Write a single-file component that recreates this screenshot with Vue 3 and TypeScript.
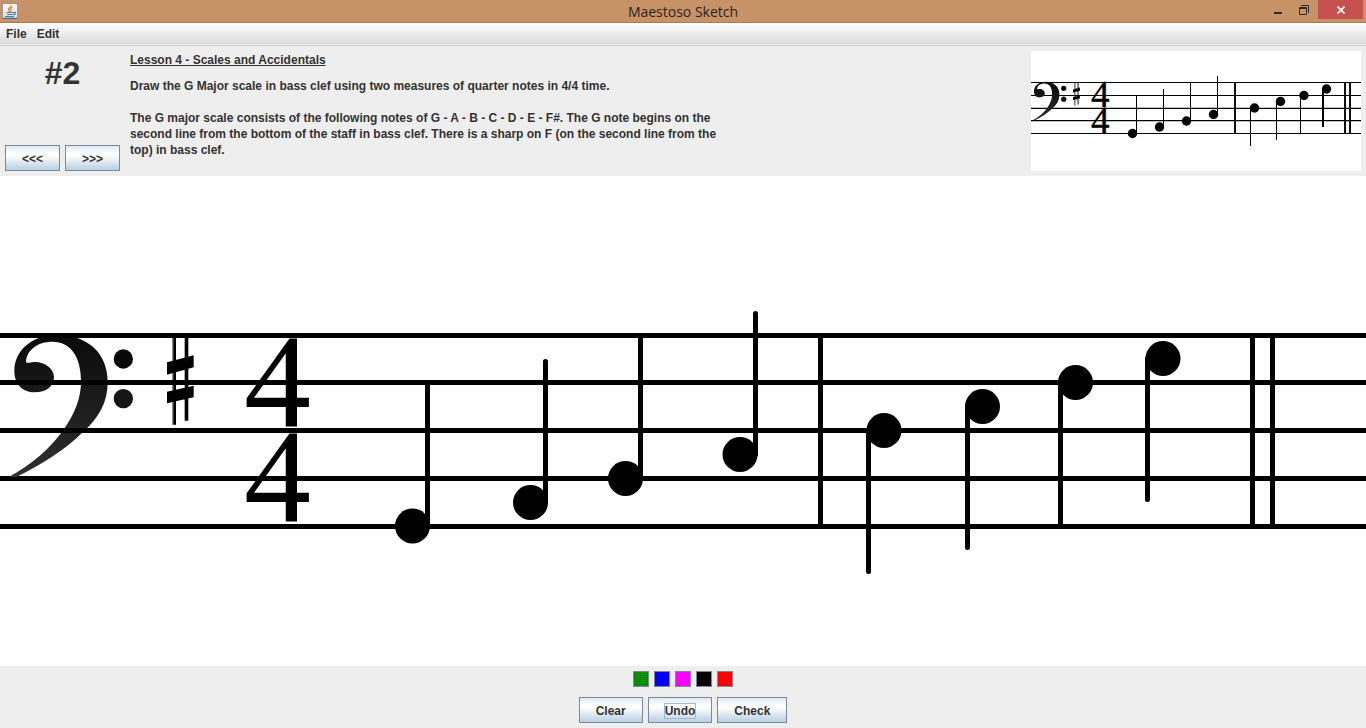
<script setup lang="ts">
import { ref } from 'vue'

interface Note {
  x: number
  y: number
  stem: number
  end: number
  width?: number
}

interface Swatch {
  name: string
  className: string
}

const staffLines: number[] = [159.5, 206.5, 254.5, 302.5, 350.5]
const barLines: number[] = [820.5, 1252.5, 1272.5]
const notes: Note[] = [
  { x: 412.5, y: 350, stem: 427.5, end: 209 },
  { x: 530.5, y: 326.5, stem: 545.5, end: 185.5 },
  { x: 625.5, y: 302.5, stem: 640.5, end: 161 },
  { x: 740, y: 278.5, stem: 755.5, end: 137.5 },
  { x: 884, y: 254.5, stem: 868.5, end: 395.5 },
  { x: 982.5, y: 230.5, stem: 967.5, end: 371.5 },
  { x: 1075.5, y: 206.5, stem: 1060.5, end: 348 },
  { x: 1163, y: 182.5, stem: 1147.5, end: 323.5 },
]

const previewLines: number[] = [31.5, 44.5, 57.5, 69.5, 82.5]
const previewBars: number[] = [204, 314, 319]
const previewNotes: Note[] = [
  { x: 101.5, y: 82.5, stem: 105.5, end: 45 },
  { x: 128.5, y: 76, stem: 132.5, end: 38 },
  { x: 155.5, y: 70, stem: 159.5, end: 32 },
  { x: 182.5, y: 63.5, stem: 186.5, end: 25 },
  { x: 223.5, y: 57, stem: 219.5, end: 95 },
  { x: 249.5, y: 50.5, stem: 245.5, end: 89 },
  { x: 273, y: 44.5, stem: 269.5, end: 82 },
  { x: 295.5, y: 38, stem: 292, end: 76, width: 2 },
]

const swatches: Swatch[] = [
  { name: 'Green', className: 'green' },
  { name: 'Blue', className: 'blue' },
  { name: 'Magenta', className: 'magenta' },
  { name: 'Black', className: 'black' },
  { name: 'Red', className: 'red' },
]
const ink = ref<string>('Black')
</script>

<template>
  <div class="window">
    <header class="titlebar">
      <svg class="app-icon" viewBox="0 0 16 16" aria-hidden="true">
        <defs>
          <linearGradient id="tile" x1="0" y1="0" x2="0" y2="1">
            <stop offset="0" stop-color="#fdfdfd" />
            <stop offset="1" stop-color="#d3dde3" />
          </linearGradient>
        </defs>
        <rect x="0.5" y="0.5" width="15" height="15" rx="1.5" fill="url(#tile)" stroke="#8a9aa5" />
        <path d="M0.8 15.4h14.4" stroke="#3f6680" />
        <path d="M9.4 1.8C10 4 6 4.8 6.4 6.6C6.6 7.5 7.4 8 7.6 8.8M10.6 4.2C8.4 5 8.2 5.8 8.9 6.8C9.3 7.5 8.9 8.2 8.4 8.8" fill="none" stroke="#e9801c" stroke-width="1.1" />
        <path d="M4.5 9.5h7M5 11.5h5.6M3 13.6h9M11.6 9.4c2.6-.8 2.6 1.9-.4 2.5" fill="none" stroke="#4d7fa3" stroke-width="1.1" />
      </svg>
      <h1 class="title">Maestoso Sketch</h1>
      <div class="controls">
        <button type="button" class="control" aria-label="Minimize">
          <svg width="10" height="12" viewBox="0 0 10 12"><path d="M1 9h8" stroke="#2a2a2a" stroke-width="2" /></svg>
        </button>
        <button type="button" class="control" aria-label="Restore">
          <svg width="10" height="12" viewBox="0 0 10 12"><path d="M2 1.5h7.5V9M.5 3.5h7v7h-7zM0 4.5h8" fill="none" stroke="#2a2a2a" /></svg>
        </button>
        <button type="button" class="control close" aria-label="Close">
          <svg width="8" height="8" viewBox="0 0 8 8"><path d="M.5.5l7 7M7.5.5l-7 7" stroke="#fff" stroke-width="1.7" /></svg>
        </button>
      </div>
    </header>

    <nav class="menubar">
      <button type="button" class="menu">File</button>
      <button type="button" class="menu">Edit</button>
    </nav>

    <section class="lesson">
      <div class="question">
        <h2 class="number">#2</h2>
        <div class="pager">
          <button type="button" class="button">&lt;&lt;&lt;</button>
          <button type="button" class="button">&gt;&gt;&gt;</button>
        </div>
      </div>
      <div class="text">
        <h3 class="lesson-title">Lesson 4 - Scales and Accidentals</h3>
        <p>Draw the G Major scale in bass clef using two measures of quarter notes in 4/4 time.</p>
        <p>The G major scale consists of the following notes of G - A - B - C - D - E - F#. The G note begins on the second line from the bottom of the staff in bass clef. There is a sharp on F (on the second line from the top) in bass clef.</p>
      </div>
      <svg class="preview" viewBox="0 0 330 120" role="img" aria-label="Example scale">
        <path d="M0 56.5h330M0 70.5h330" stroke="#000" stroke-opacity="0.25" />
        <line v-for="y in previewLines" :key="y" x1="0" x2="330" :y1="y" :y2="y" stroke="#000" />
        <use href="#bass-clef" x="-1" y="28" width="41" height="41" />
        <use href="#sharp" x="42" y="31" width="7" height="25" />
        <text class="meter preview-meter" x="60" y="56" font-size="37">4</text>
        <text class="meter preview-meter" x="60" y="82" font-size="37">4</text>
        <line v-for="x in previewBars" :key="x" :x1="x" :x2="x" y1="31" y2="83" stroke="#111" stroke-width="2" />
        <g v-for="note in previewNotes" :key="note.x">
          <circle :cx="note.x" :cy="note.y" r="4.7" />
          <line :x1="note.stem" :x2="note.stem" :y1="note.y" :y2="note.end" stroke="#000" :stroke-width="note.width ?? 1" />
        </g>
      </svg>
    </section>

    <main class="stage">
      <svg class="score" viewBox="0 0 1366 490" role="img" aria-label="Staff">
        <defs>
          <linearGradient id="clef-ink" x1="0" y1="0" x2="0" y2="1">
            <stop offset="0" stop-color="#0a0a0a" />
            <stop offset="1" stop-color="#303030" />
          </linearGradient>
          <symbol id="bass-clef" viewBox="0 0 450 450" overflow="visible">
            <path d="M26 456C95 419 152 369 188 318C224 267 244 220 243 165C242 95 212 50 157 50C112 50 80 76 78 110Q80 115 88 113C125 104 162 127 162 157C162 184 138 202 105 202C66 202 43 176 43 138C43 78 94 30 172 30C264 30 323 86 323 170C323 232 298 276 248 322C196 374 122 422 48 456z" fill="url(#clef-ink)" />
            <circle cx="370" cy="102" r="29" fill="#080808" />
            <circle cx="370" cy="221" r="29" fill="#161616" />
          </symbol>
          <symbol id="sharp" viewBox="501 51 81 270">
            <path d="M516 53h5v261h-5z" fill="#888" />
            <path d="M520 53h8v261h-8zM554 53h11v249h-11zM501 127l80-21v36l-80 22zM501 215l80-18v35l-80 18z" />
          </symbol>
        </defs>
        <line v-for="y in staffLines" :key="y" x1="0" x2="1366" :y1="y" :y2="y" stroke="#000" stroke-width="5" />
        <use href="#bass-clef" x="0" y="149" width="150" height="150" />
        <use href="#sharp" x="167" y="161" width="27" height="90" />
        <text class="meter" x="244" y="250" font-size="134">4</text>
        <text class="meter" x="244" y="345" font-size="134">4</text>
        <path class="stroke" d="M0 159.5h1366M0 206.5h1366M0 254.5h1366" />
        <line v-for="x in barLines" :key="x" class="stroke" :x1="x" :x2="x" y1="160" y2="350" />
        <g v-for="note in notes" :key="note.x">
          <circle :cx="note.x" :cy="note.y" r="17.5" />
          <line class="stroke" :x1="note.stem" :x2="note.stem" :y1="note.y" :y2="note.end" />
        </g>
      </svg>
    </main>

    <footer class="tools">
      <div class="swatches">
        <button
          v-for="swatch in swatches"
          :key="swatch.name"
          type="button"
          class="swatch"
          :class="swatch.className"
          :aria-label="swatch.name"
          :aria-pressed="ink === swatch.name"
          @click="ink = swatch.name"
        ></button>
      </div>
      <div class="actions">
        <button type="button" class="button">Clear</button>
        <button type="button" class="button"><span class="focused">Undo</span></button>
        <button type="button" class="button">Check</button>
      </div>
    </footer>
  </div>
</template>

<style>
body {
  margin: 0;
  background: #eee;
}
</style>

<style scoped>
.window {
  display: flex;
  flex-direction: column;
  min-height: 100vh;
  background: #eee;
  color: #333;
  font: bold 12px/16px "Liberation Sans", Arial, sans-serif;
}
h1,
h2,
h3,
p {
  margin: 0;
}
button {
  box-sizing: border-box;
  margin: 0;
  padding: 0;
  border: 0;
  background: none;
  color: inherit;
  font: inherit;
}
.titlebar {
  display: grid;
  grid-template-columns: 1fr auto 1fr;
  box-sizing: border-box;
  height: 23px;
  background: #c79265;
  border-bottom: 1px solid #aa7a50;
}
.app-icon {
  width: 16px;
  height: 16px;
  margin: 3px 2px;
}
.title {
  color: #2a2522;
  font: 14px/23px "Open Sans", "Noto Sans", sans-serif;
}
.controls {
  display: flex;
  justify-content: flex-end;
  align-items: flex-start;
  padding-right: 3px;
}
.control {
  display: flex;
  align-items: center;
  justify-content: center;
  width: 26px;
  height: 19px;
}
.control.close {
  width: 45px;
  margin-left: 1px;
  background: #c75050;
}
.menubar {
  display: flex;
  gap: 10px;
  box-sizing: border-box;
  height: 23px;
  padding: 0 6px;
  background: linear-gradient(#fff, #dadada 21px, #eee 21px);
  border-bottom: 1px solid #ccc;
}
.lesson {
  display: flex;
  gap: 10px;
  padding: 5px;
}
.question {
  display: flex;
  flex-direction: column;
  justify-content: space-between;
}
.number {
  padding-top: 4px;
  font-size: 32px;
  line-height: 36px;
  text-align: center;
}
.pager,
.swatches,
.actions {
  display: flex;
  gap: 5px;
}
.text {
  flex: 1;
  padding-top: 1px;
}
.text p {
  max-width: 590px;
}
.text p + p {
  margin-top: 16px;
}
.lesson-title {
  margin-bottom: 10px;
  font-size: 12px;
  text-decoration: underline;
}
.preview {
  width: 330px;
  height: 120px;
  background: #fff;
}
.meter {
  font-family: "Liberation Serif", "Times New Roman", serif;
  font-weight: normal;
  fill: #000;
}
.preview-meter {
  stroke: #000;
  stroke-width: 0.4px;
}
.stage {
  display: flex;
  flex: 1;
  align-items: center;
  background: #fff;
}
.score {
  display: block;
  width: 100%;
}
.stroke {
  stroke: #000;
  stroke-width: 5px;
  stroke-linecap: round;
}
.tools {
  display: flex;
  flex-direction: column;
  align-items: center;
  gap: 10px;
  padding: 5px;
}
.swatch {
  width: 16px;
  height: 16px;
  border: 1px solid #7a8a99;
}
.green {
  background: repeating-conic-gradient(#007800 0 25%, #00a000 0 50%) 0 0 / 2px 2px;
}
.blue {
  background: #00f;
}
.magenta {
  background: #f0f;
}
.black {
  background: #000;
}
.red {
  background: #f00;
}
.button {
  height: 26px;
  padding: 1px 16px 0;
  border: 1px solid #7a8a99;
  background: linear-gradient(#dde8f3, #fff 30%, #fff 40%, #b8cfe5);
}
.pager .button {
  width: 55px;
  padding: 1px 0 0;
}
.focused {
  outline: 1px solid #a3b8cc;
}
</style>
